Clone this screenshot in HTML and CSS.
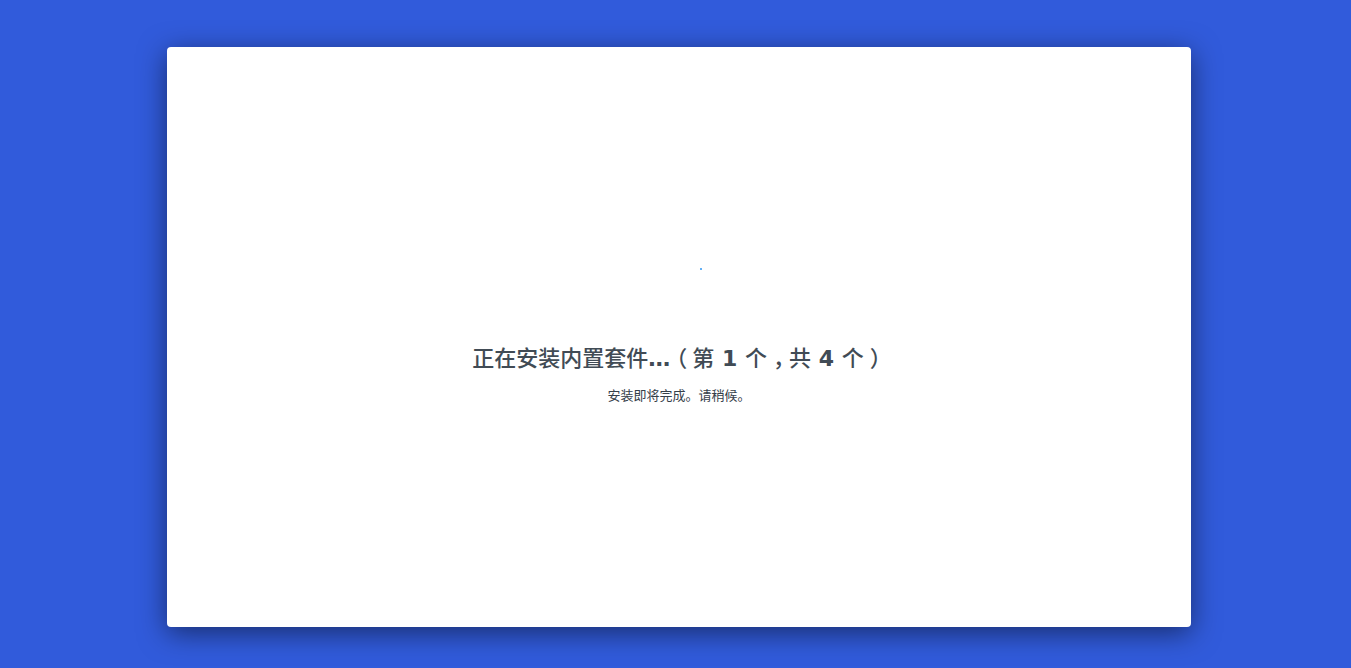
FILE: index.html
```
<!DOCTYPE html>
<html lang="zh-CN">
<head>
<meta charset="utf-8">
<meta name="viewport" content="width=device-width, initial-scale=1">
<title>正在安装内置套件</title>
<link rel="stylesheet" href="styles.css">
</head>
<body class="page">
<main class="panel">
  <div class="progress" aria-hidden="true"><span class="progress-dot"></span></div>
  <h1 class="title">正在安装内置套件<b>…</b><span class="punctuation">（</span>第<b> 1 </b>个<span class="punctuation">，</span>共<b> 4 </b>个<span class="punctuation">）</span></h1>
  <p class="message">安装即将完成。请稍候。</p>
</main>
</body>
</html>
```
FILE: styles.css
```
* {
  box-sizing: border-box;
}

.page {
  display: flex;
  align-items: center;
  justify-content: center;
  min-height: 100vh;
  margin: 0;
  padding: 24px 0 18px 7px;
  background: #315bdb;
  font-family: "DejaVu Sans", "Noto Sans CJK SC", sans-serif;
  color: #414b55;
}

.panel {
  display: flex;
  flex-direction: column;
  align-items: center;
  width: 100%;
  max-width: 1024px;
  min-height: 580px;
  padding: 221px 24px 32px;
  background: #fff;
  border-radius: 4px;
  box-shadow: 0 6px 28px rgba(0, 0, 0, 0.5);
}

.progress {
  display: flex;
  justify-content: flex-end;
  width: 46px;
  height: 73px;
}

.progress-dot {
  width: 2px;
  height: 2px;
  background: #64b0f5;
}

.title {
  margin: 0;
  font-size: 22px;
  font-weight: 500;
  line-height: 36px;
  text-align: center;
}

.title b {
  font-weight: 700;
}

/* Half-width glyphs centred in a full-width cell */
.punctuation {
  padding: 0 5px 0 6px;
  font-feature-settings: "halt";
}

.message {
  margin: 9px 0 0;
  font-size: 13px;
  line-height: 20px;
  color: #35404a;
  text-align: center;
}
```
